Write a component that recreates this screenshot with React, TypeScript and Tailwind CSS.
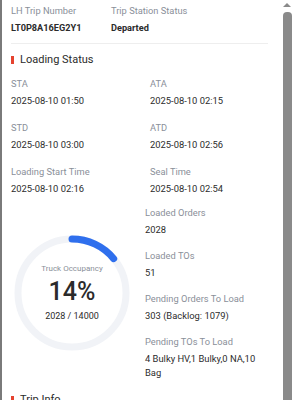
import React from 'react';

const font = { fontFamily: 'Roboto, "Noto Sans", sans-serif' };

function Field({ label, value }: { label: string; value: React.ReactNode }) {
    return (
        <div>
            <div className="text-[9.3px] leading-[14px] text-[#8a8f99]">{label}</div>
            <div className="mt-[3px] text-[9.4px] leading-[14px] text-[#2b2b2b]">{value}</div>
        </div>
    );
}

function SectionTitle({ title }: { title: string }) {
    return (
        <div className="flex items-center gap-[6px]">
            <span className="w-[3px] h-[8px] bg-[#e5432f]" />
            <span className="text-[11px] leading-[16px] text-[#2b2b2b]">{title}</span>
        </div>
    );
}

function OccupancyRing({ percent }: { percent: number }) {
    const r = 54;
    const c = 2 * Math.PI * r;
    return (
        <div className="relative w-[116px] h-[116px]">
            <svg width="116" height="116" viewBox="0 0 116 116">
                <circle cx="58" cy="58" r={r} fill="none" stroke="#f1f3f7" strokeWidth="7" />
                <circle
                    cx="58"
                    cy="58"
                    r={r}
                    fill="none"
                    stroke="#2f6fed"
                    strokeWidth="7"
                    strokeLinecap="round"
                    strokeDasharray={`${(c * percent) / 100} ${c}`}
                    transform="rotate(-90 58 58)"
                />
            </svg>
            <div className="absolute inset-0 flex flex-col items-center justify-center">
                <div className="text-[8px] leading-[10px] text-[#8a8f99]">Truck Occupancy</div>
                <div className="mt-[4px] text-[25px] leading-[28px] font-medium text-[#2b2b2b]">{percent}%</div>
                <div className="mt-[4px] text-[9px] leading-[12px] text-[#2b2b2b]">2028 / 14000</div>
            </div>
        </div>
    );
}

export default function App() {
    return (
        <div className="w-[294px] h-[400px] overflow-hidden bg-white flex" style={font}>
            <div className="w-[2px] bg-[#7a7a7a]" />

            <div className="flex-1 pl-[9px] pr-[12px] pt-[4px]">
                {/* Header */}
                <div className="flex">
                    <div className="w-[100px]">
                        <div className="text-[9.3px] leading-[14px] text-[#8a8f99]">LH Trip Number</div>
                        <div className="mt-[3px] text-[9.2px] leading-[14px] font-bold text-[#2b2b2b]">LT0P8A16EG2Y1</div>
                    </div>
                    <div>
                        <div className="text-[9.3px] leading-[14px] text-[#8a8f99]">Trip Station Status</div>
                        <div className="mt-[3px] text-[9.2px] leading-[14px] font-bold text-[#2b2b2b]">Departed</div>
                    </div>
                </div>
                <div className="mt-[8px] h-px bg-[#eeeeee]" />

                {/* Loading Status */}
                <div className="mt-[8px]">
                    <SectionTitle title="Loading Status" />
                </div>
                <div className="mt-[9px] grid grid-cols-[139px_1fr] gap-y-[13px]">
                    <Field label="STA" value="2025-08-10 01:50" />
                    <Field label="ATA" value="2025-08-10 02:15" />
                    <Field label="STD" value="2025-08-10 03:00" />
                    <Field label="ATD" value="2025-08-10 02:56" />
                    <Field label="Loading Start Time" value="2025-08-10 02:16" />
                    <Field label="Seal Time" value="2025-08-10 02:54" />
                </div>

                <div className="mt-[10px] flex items-center">
                    <div className="w-[134px]">
                        <div className="ml-[3px]">
                            <OccupancyRing percent={14} />
                        </div>
                    </div>
                    <div className="flex-1 flex flex-col gap-[12px]">
                        <Field label="Loaded Orders" value="2028" />
                        <Field label="Loaded TOs" value="51" />
                        <Field label="Pending Orders To Load" value="303 (Backlog: 1079)" />
                        <Field label="Pending TOs To Load" value="4 Bulky HV,1 Bulky,0 NA,10 Bag" />
                    </div>
                </div>

                <div className="mt-[12px]">
                    <SectionTitle title="Trip Info" />
                </div>
            </div>

            {/* Scrollbar */}
            <div className="w-[14px] bg-white flex flex-col items-center">
                <div className="mt-[3px] w-0 h-0 border-l-[4px] border-r-[4px] border-b-[4px] border-l-transparent border-r-transparent border-b-[#8a8a8a]" />
                <div className="mt-[5px] w-[9px] flex-1 rounded-t-[4px] bg-[#8a8a8a]" />
            </div>
        </div>
    );
}
